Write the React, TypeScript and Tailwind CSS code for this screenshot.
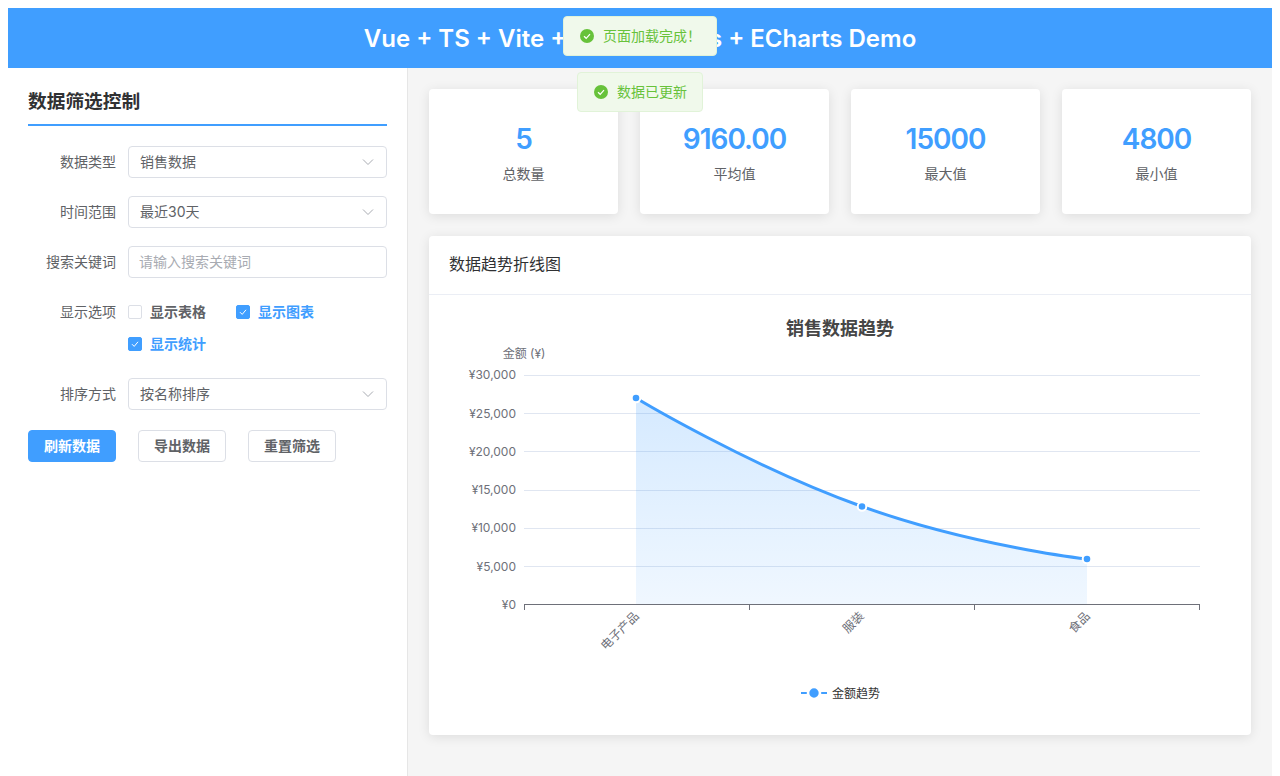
import React from "react";

const Chevron = () => (
  <svg width="12" height="8" viewBox="0 0 12 8" className="shrink-0" fill="none" stroke="#a8abb2" strokeWidth="1">
    <path d="M1 1.5 L6 6.5 L11 1.5" />
  </svg>
);

const Select = ({ value }: { value: string }) => (
  <div className="flex h-8 flex-1 items-center justify-between rounded border border-[#dcdfe6] bg-white pl-[11px] pr-[12px] text-sm text-[#606266]">
    <span>{value}</span>
    <Chevron />
  </div>
);

const Row = ({ label, children }: { label: string; children: React.ReactNode }) => (
  <div className="mb-[18px] flex">
    <div className="flex h-8 w-[100px] shrink-0 items-center justify-end pr-3 text-sm text-[#606266]">{label}</div>
    <div className="flex-1 flex min-w-0">{children}</div>
  </div>
);

const Check = ({ label, checked }: { label: string; checked?: boolean }) => (
  <label className={"flex h-8 items-center gap-2 text-sm font-semibold " + (checked ? "text-[#409eff]" : "text-[#606266]")}>
    <span className={"flex h-[14px] w-[14px] items-center justify-center rounded-[2px] border " + (checked ? "border-[#409eff] bg-[#409eff]" : "border-[#dcdfe6] bg-white")}>
      {checked && (
        <svg width="10" height="10" viewBox="0 0 10 10" fill="none" stroke="#fff" strokeWidth="1">
          <path d="M2 5.2 L4.2 7.4 L8 2.8" />
        </svg>
      )}
    </span>
    {label}
  </label>
);

const Button = ({ label, primary }: { label: string; primary?: boolean }) => (
  <button className={"flex h-8 w-[88px] items-center justify-center rounded border text-sm font-semibold " + (primary ? "border-[#409eff] bg-[#409eff] text-white" : "border-[#dcdfe6] bg-white text-[#606266]")}>
    {label}
  </button>
);

const Stat = ({ value, label }: { value: string; label: string }) => (
  <div className="flex h-[125px] flex-1 flex-col items-center rounded bg-white pt-[31px] shadow-[0_2px_12px_rgba(0,0,0,0.1)]">
    <div className="h-[38px] text-[28px] leading-[38px] font-semibold tracking-[-1px] text-[#409eff]">{value}</div>
    <div className="mt-[6px] text-sm leading-5 text-[#606266]">{label}</div>
  </div>
);

const Toast = ({ text, className }: { text: string; className: string }) => (
  <div className={"absolute flex h-10 items-center gap-2 rounded border border-[#e1f3d8] bg-[#f0f9eb] pl-[15px] text-sm text-[#67c23a] " + className}>
    <svg width="16" height="16" viewBox="0 0 16 16">
      <circle cx="8" cy="8" r="7" fill="#67c23a" />
      <path d="M5 8.2 L7.2 10.3 L11 6.2" fill="none" stroke="#fff" strokeWidth="1.2" />
    </svg>
    <span>{text}</span>
  </div>
);

const ticks = [
  ["¥30,000", 375.5, 379],
  ["¥25,000", 413.5, 418],
  ["¥20,000", 451.5, 456],
  ["¥15,000", 490.5, 494],
  ["¥10,000", 528.5, 532],
  ["¥5,000", 566.5, 571],
  ["¥0", 604.5, 609],
] as const;

const line = "M636 398 C636 398 750 466.5 862 506.5 C974 546.5 1087 559 1087 559";
const cats = [
  ["电子产品", 633, 610],
  ["服装", 858, 610],
  ["食品", 1084, 610],
] as const;

const Chart = () => (
  <svg viewBox="429 295 822 440" width="822" height="440" className="block">
    <defs>
      <linearGradient id="area" x1="0" y1="0" x2="0" y2="1">
        <stop offset="0" stopColor="#409eff" stopOpacity="0.22" />
        <stop offset="1" stopColor="#409eff" stopOpacity="0.08" />
      </linearGradient>
    </defs>
    <text x="840" y="335" textAnchor="middle" fontSize="18" fontWeight="700" fill="#464646">销售数据趋势</text>
    <text x="524" y="358" textAnchor="middle" fontSize="12" fill="#6e7079">金额 (¥)</text>
    {ticks.map(([t, y, ty]) => (
      <g key={t}>
        {y < 604 && <line x1="524" x2="1200" y1={y} y2={y} stroke="#e0e6f1" />}
        <text x="516" y={ty} textAnchor="end" fontSize="12" fill="#6e7079">{t}</text>
      </g>
    ))}
    <path d={line + " L1087 604.5 L636 604.5 Z"} fill="url(#area)" />
    <line x1="524" x2="1200" y1="604.5" y2="604.5" stroke="#6e7079" />
    {[524.5, 749.5, 974.5, 1199.5].map((x) => (
      <line key={x} x1={x} x2={x} y1="604" y2="610" stroke="#6e7079" />
    ))}
    <path d={line} fill="none" stroke="#409eff" strokeWidth="3" />
    {[[636, 398], [862, 506.5], [1087, 559]].map(([x, y]) => (
      <circle key={x} cx={x} cy={y} r="4.3" fill="#409eff" stroke="#fff" strokeWidth="2" />
    ))}
    {cats.map(([t, x, y]) => (
      <text key={t} x={x} y={y} textAnchor="end" dominantBaseline="hanging" fontSize="12" fill="#6e7079" transform={`rotate(-45 ${x} ${y})`}>{t}</text>
    ))}
    <line x1="801" x2="827" y1="693" y2="693" stroke="#409eff" strokeWidth="2" />
    <circle cx="814" cy="693" r="6" fill="#409eff" stroke="#fff" strokeWidth="2.6" />
    <text x="832" y="698" fontSize="12" fill="#333">金额趋势</text>
  </svg>
);

export default function App() {
  return (
    <div className="relative h-[776px] overflow-hidden bg-white px-2 pt-2 font-['Inter','Noto_Sans_CJK_SC',sans-serif]">
      <header className="flex h-[60px] items-center justify-center bg-[#409eff] pt-[2px] text-2xl font-semibold text-white">
        Vue + TS + Vite + Element Plus + ECharts Demo
      </header>
      <div className="flex h-[708px]">
        <aside className="w-[400px] shrink-0 border-r border-[#e6e6e6] bg-white px-5 pt-5">
          <h2 className="mb-5 border-b-2 border-[#409eff] pt-px pb-[9px] text-[18.72px] leading-[26px] font-semibold text-[#303133]">数据筛选控制</h2>
          <Row label="数据类型"><Select value="销售数据" /></Row>
          <Row label="时间范围"><Select value="最近30天" /></Row>
          <Row label="搜索关键词">
            <input
              placeholder="请输入搜索关键词"
              className="h-8 min-w-0 flex-1 rounded border border-[#dcdfe6] bg-white px-[10px] pb-[2px] text-sm outline-none placeholder:text-[#a8abb2]"
            />
          </Row>
          <Row label="显示选项">
            <div className="flex flex-wrap gap-x-[30px]">
              <Check label="显示表格" />
              <Check label="显示图表" checked />
              <div className="w-full"><Check label="显示统计" checked /></div>
            </div>
          </Row>
          <Row label="排序方式"><Select value="按名称排序" /></Row>
          <div className="mt-5 flex gap-[22px]">
            <Button label="刷新数据" primary />
            <Button label="导出数据" />
            <Button label="重置筛选" />
          </div>
        </aside>
        <main className="flex-1 bg-[#f5f5f5] px-[21px] pt-[21px]">
          <div className="flex gap-[22px]">
            <Stat value="5" label="总数量" />
            <Stat value="9160.00" label="平均值" />
            <Stat value="15000" label="最大值" />
            <Stat value="4800" label="最小值" />
          </div>
          <section className="mt-[22px] rounded bg-white shadow-[0_2px_12px_rgba(0,0,0,0.1)]">
            <div className="flex h-[59px] items-center border-b border-[#ebeef5] px-5 pb-[2px] text-base text-[#303133]">数据趋势折线图</div>
            <Chart />
          </section>
        </main>
      </div>
      <Toast text="页面加载完成！" className="left-[563px] top-4 w-[154px]" />
      <Toast text="数据已更新" className="left-[577px] top-[72px] w-[126px]" />
    </div>
  );
}
